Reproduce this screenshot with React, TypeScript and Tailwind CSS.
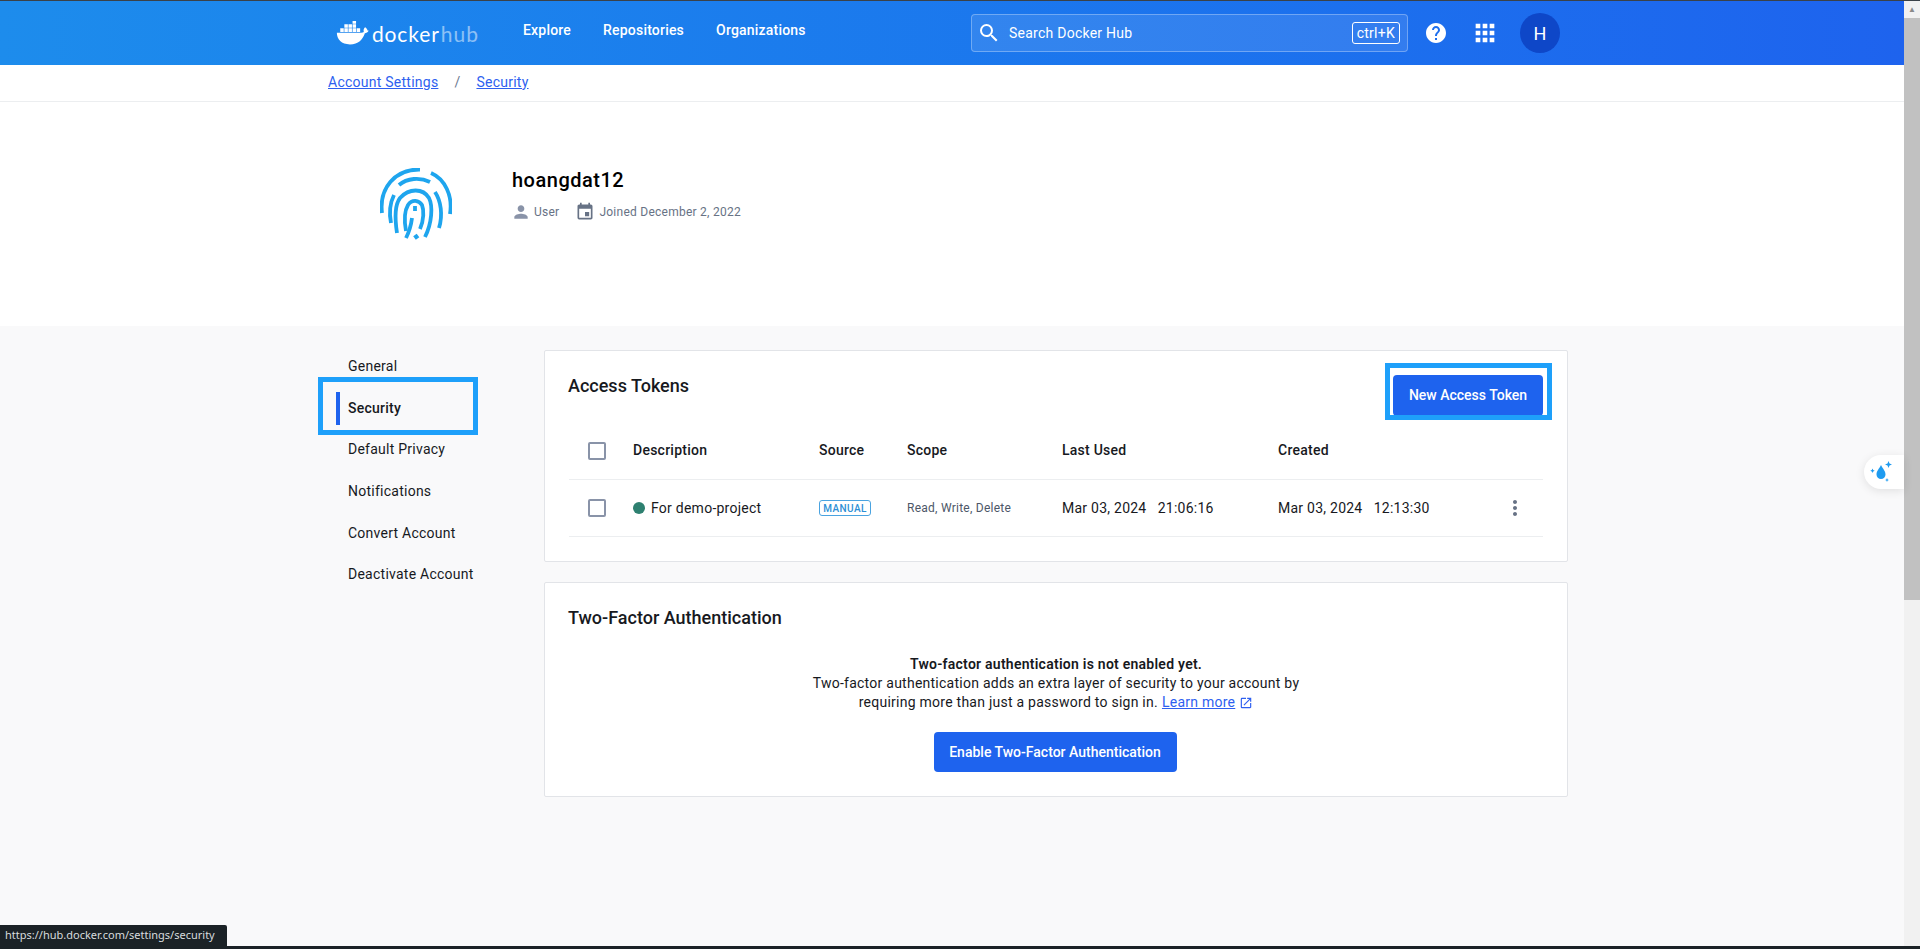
import { MdApps, MdEvent, MdHelp, MdMoreVert, MdOpenInNew, MdPerson, MdSearch } from "react-icons/md";

const sideItems = ["General", "Security", "Default Privacy", "Notifications", "Convert Account", "Deactivate Account"];

function Whale() {
  return (
    <svg viewBox="0 0 32 24" className="h-[24px] w-[33px] fill-white">
      <path d="M0.4 11.8h24.2c1.2 0 2.2-.3 2.8-.8-.5-1.3-.3-3.2.7-4.2l.6-.6.7.5c1 .8 1.500 1.800 1.600 2.900 1.100-.3 1.400-.1 1 .4-.8 1.400-2.100 2.100-3.600 2.200C26.400 18.400 22 23.400 13.500 23.400 5 23.400.400 18.300.400 11.800z" />
      <path d="M3.800 7.300h3.500v3.600H3.800zM7.900 7.300h3.500v3.600H7.900zM12 7.300h3.500v3.600H12zM16.100 7.300h3.500v3.600h-3.500zM20.200 7.300h3.500v3.600h-3.500zM7.900 3.300h3.500v3.500H7.900zM12 3.300h3.500v3.500H12zM16.100 3.300h3.500v3.500h-3.500zM16.100-.3h3.500v3h-3.500z" />
    </svg>
  );
}

function Fingerprint() {
  return (
    <svg viewBox="0 0 72 72" fill="none" stroke="#1ea5ee" strokeWidth="3.800" strokeLinecap="butt" className="h-[72px] w-[72px]">
      <path d="M2 45 C-1 20 15 1 40 1.500" />
      <path d="M51 5 C65 11 73 28 70 46" />
      <path d="M19 17 C27 10 40 9 50 14" />
      <path d="M14 27 C10 35 9 45 11 55" />
      <path d="M55 24 C61 33 63 47 59 60" />
      <path d="M17 65 C15 52 14 38 20 30 C29 20 43 20 49 30 C53 38 52 55 45 69" />
      <path d="M26 63 C24 52 25 42 28 37 C32 31 39 32 42 37 C44 42 44 52 40 61" />
      <path d="M35 38 L35 43" />
      <path d="M32 50 C31 58 29 64 26 70" />
      <path d="M34.500 70 L38 67.500" strokeWidth="4.500" />
    </svg>
  );
}

function Droplet() {
  return (
    <svg viewBox="0 0 24 24" className="h-[24px] w-[24px] fill-[#1e9bf0]">
      <path d="M11 5 C13 9 15.500 11 15.500 14.500 A4.500 4.500 0 0 1 6.500 14.500 C6.500 11 9 9 11 5z" />
      <path d="M18.500 1 L19.500 3.500 L22 4.500 L19.500 5.500 L18.500 8 L17.500 5.500 L15 4.500 L17.500 3.500z" />
      <path d="M2.500 8.500 L3.200 10 L4.700 10.700 L3.200 11.400 L2.500 13 L1.800 11.400 L0.300 10.700 L1.800 10z" />
      <path d="M17 18 L17.600 19.400 L19 20 L17.600 20.600 L17 22 L16.400 20.600 L15 20 L16.400 19.400z" />
    </svg>
  );
}

function Checkbox() {
  return <span className="ml-[19px] block h-[18px] w-[18px] rounded-[2px] border-2 border-[#8993a8]" />;
}

const tableGrid = "grid grid-cols-[64px_186px_88px_155px_216px_225px_28px] items-center";

export default function App() {
  return (
    <div className="relative flex h-[949px] flex-col overflow-hidden border-t border-b-[3px] border-t-[#3a4148] border-b-[#1b2226] bg-white font-['Roboto',sans-serif] text-[14px] tracking-[.25px] text-[#17191e]">
      <div className="flex min-h-0 flex-1">
        <div className="flex min-w-0 flex-1 flex-col">
          {/* top bar */}
          <header className="flex h-16 shrink-0 items-center bg-gradient-to-r from-[#1d8cec] to-[#1e63ee] pl-[336px] text-white">
            <div className="flex w-[635px] items-center">
              <div className="flex w-[143px] items-center">
                <Whale />
                <span className="ml-[3px] font-['Lato',sans-serif] text-[21px] leading-none tracking-[.9px]">docker</span>
                <span className="ml-[1px] font-['Lato',sans-serif] text-[21px] leading-none tracking-[1px] text-white/50">hub</span>
              </div>
              <nav className="-mt-[5px] ml-[44px] flex gap-8 font-medium tracking-[.2px]">
                <span>Explore</span>
                <span>Repositories</span>
                <span>Organizations</span>
              </nav>
            </div>
            <div className="flex h-[38px] w-[437px] items-center rounded-[4px] border border-white/30 bg-white/10 pl-[5px] pr-[7px]">
              <MdSearch className="h-[24px] w-[24px]" />
              <span className="ml-[8px] flex-1">Search Docker Hub</span>
              <span className="rounded-[3px] border border-white px-[4px] text-[14px] leading-[20px]">ctrl+K</span>
            </div>
            <MdHelp className="ml-[16px] h-[24px] w-[24px]" />
            <MdApps className="ml-[23px] h-[28px] w-[28px]" />
            <div className="ml-[21px] flex h-10 w-10 items-center justify-center rounded-full bg-[#0e47c8] text-[18px]">H</div>
          </header>

          {/* breadcrumb */}
          <div className="flex h-[37px] shrink-0 items-center border-b border-[#eceef0] pb-[2px] pl-[328px]">
            <a className="text-[#2e5ff0] underline">Account Settings</a>
            <span className="mx-[16px] text-[#6c7a90]">/</span>
            <a className="text-[#2e5ff0] underline">Security</a>
          </div>

          {/* profile */}
          <div className="flex h-[224px] shrink-0 pl-[380px] pt-[66px]">
            <Fingerprint />
            <div className="ml-[60px]">
              <h1 className="mt-[-2px] text-[20px] font-medium leading-[28px] tracking-[.5px] text-black">hoangdat12</h1>
              <div className="mt-[8px] flex items-center text-[12px] text-[#677285]">
                <MdPerson className="-ml-[1px] h-[20px] w-[20px] text-[#8993a8]" />
                <span className="ml-[3px]">User</span>
                <MdEvent className="ml-[16px] h-[20px] w-[20px] text-[#677285]" />
                <span className="ml-[4px]">Joined December 2, 2022</span>
              </div>
            </div>
          </div>

          {/* settings body */}
          <main className="flex min-h-0 flex-1 bg-[#f9f9fa] pl-[348px] pt-[24px]">
            <aside className="w-[196px] shrink-0">
              <ul className="-mt-[4px]">
                {sideItems.map((item) => (
                  <li key={item} className={`relative flex h-[41.6px] items-center ${item === "Security" ? "font-medium" : ""}`}>
                    {item === "Security" && (
                      <>
                        <span className="absolute -left-[12px] top-[4px] h-[33px] w-[4px] bg-[#1e63ee]" />
                        <span className="absolute -left-[30px] -top-[11px] h-[58px] w-[160px] border-[5px] border-[#1ea0fa]" />
                      </>
                    )}
                    {item}
                  </li>
                ))}
              </ul>
            </aside>

            <div className="flex w-[1024px] flex-col gap-[20px]">
              <section className="h-[212px] rounded-[2px] border border-[#e2e4e8] bg-white px-[24px]">
                <div className="flex h-[71px] items-start justify-between">
                  <h2 className="-ml-px mt-[22px] text-[18px] font-medium leading-[26px] tracking-normal">Access Tokens</h2>
                  <div className="relative mt-[24px]">
                    <button className="h-[41px] w-[150px] rounded-[4px] bg-[#1e63ee] text-[14px] font-medium tracking-normal text-white">New Access Token</button>
                    <span className="absolute -left-[8px] -top-[12px] h-[57px] w-[167px] border-[5px] border-[#1ea0fa]" />
                  </div>
                </div>
                <div className={`${tableGrid} h-[58px] border-b border-[#eceef0] font-medium`}>
                  <Checkbox />
                  <span>Description</span>
                  <span>Source</span>
                  <span>Scope</span>
                  <span>Last Used</span>
                  <span>Created</span>
                </div>
                <div className={`${tableGrid} h-[57px] border-b border-[#eceef0]`}>
                  <Checkbox />
                  <span className="flex items-center">
                    <span className="mr-[6px] h-[12px] w-[12px] rounded-full bg-[#2e8070]" />
                    For demo-project
                  </span>
                  <span className="flex h-[16px] w-[52px] items-center justify-center rounded-[3px] border border-[#4aa3e0] text-[10px] font-medium tracking-[.4px] text-[#2d8fd5]">MANUAL</span>
                  <span className="text-[12px] text-[#4d5768]">Read, Write, Delete</span>
                  <span className="whitespace-pre">Mar 03, 2024   21:06:16</span>
                  <span className="whitespace-pre">Mar 03, 2024   12:13:30</span>
                  <MdMoreVert className="h-[24px] w-[24px] text-[#677285]" />
                </div>
              </section>

              <section className="h-[215px] rounded-[2px] border border-[#e2e4e8] bg-white px-[24px]">
                <h2 className="-ml-px mt-[22px] text-[18px] font-medium leading-[26px] tracking-normal">Two-Factor Authentication</h2>
                <div className="mt-[24px] flex flex-col items-center text-center leading-[19px]">
                  <p className="font-semibold">Two-factor authentication is not enabled yet.</p>
                  <p>Two-factor authentication adds an extra layer of security to your account by</p>
                  <p className="flex items-center">
                    requiring more than just a password to sign in.
                    <a className="ml-[4px] text-[#2e5ff0] underline">Learn more</a>
                    <MdOpenInNew className="ml-[4px] h-[14px] w-[14px] text-[#2e5ff0]" />
                  </p>
                  <button className="-ml-[2px] mt-[20px] h-[40px] w-[243px] rounded-[4px] bg-[#1e63ee] font-medium tracking-normal text-white">Enable Two-Factor Authentication</button>
                </div>
              </section>
            </div>
          </main>
        </div>

        {/* browser scrollbar */}
        <div className="flex w-4 shrink-0 flex-col bg-[#f1f1f1]">
          <span className="h-[17px] text-center text-[8px] leading-[17px] text-[#8a8a8a]">▲</span>
          <span className="h-[582px] bg-[#c1c1c1]" />
        </div>
      </div>

      {/* floating tab */}
      <div className="absolute right-[16px] top-[454px] flex h-[34px] w-[40px] items-center rounded-l-[17px] bg-white pl-[6px] shadow-[0_2px_10px_rgba(0,0,0,0.1)]">
        <Droplet />
      </div>

      {/* browser link status */}
      <div className="absolute bottom-0 left-0 flex h-[21px] w-[227px] items-center rounded-tr-[2px] bg-[#1b2226] pl-[5px] font-['Noto_Sans',sans-serif] text-[11px] tracking-normal text-[#d8dcdf]">
        https://hub.docker.com/settings/security
      </div>
    </div>
  );
}
